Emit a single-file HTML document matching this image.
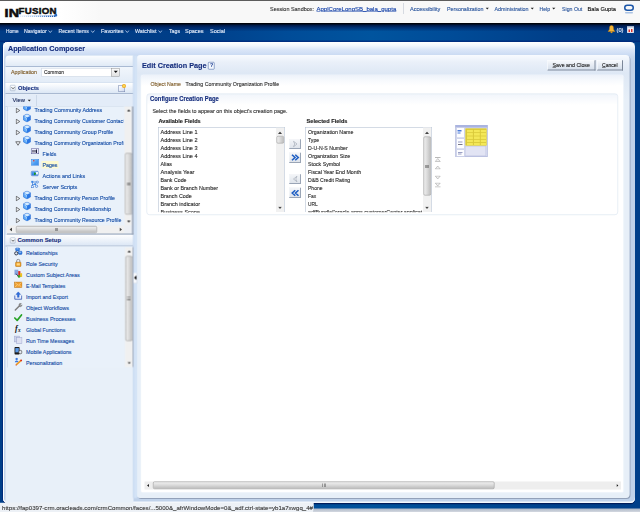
<!DOCTYPE html>
<html><head><meta charset="utf-8"><title>Application Composer</title>
<style>
html,body{margin:0;padding:0;}
body{width:640px;height:512px;overflow:hidden;background:linear-gradient(90deg,#003f8a 0,#00408c 25%,#004c98 45%,#00529c 58%,#004a94 72%,#00408c 90%,#003f8a 100%);font-family:"Liberation Sans",sans-serif;}
#stage{position:absolute;left:0;top:0;width:1280px;height:1024px;transform:scale(.5);transform-origin:0 0;overflow:hidden;}
#stage div, #stage svg, .t{position:absolute;box-sizing:border-box;}
.t{white-space:nowrap;display:block;transform-origin:0 50%;-webkit-text-stroke:0.250px currentColor;}

</style></head>
<body>
<div id="stage">
<!-- top chrome -->
<div style="left:0;top:0;width:1280px;height:2px;background:#5c5c5c"></div>
<div style="left:0;top:2px;width:1280px;height:44px;background:linear-gradient(90deg,#ffffff 0,#ffffff 120px,#f8f8f8 200px,#f8f8f8 100%)"></div>
<div style="left:0;top:53px;width:1280px;height:32px;background:linear-gradient(90deg,#003c86 0,#003e88 30%,#004c98 45%,#00549e 58%,#004c98 70%,#003e88 88%,#003c86 100%)"></div>
<div style="left:0;top:45.500px;width:1280px;height:17px;background:linear-gradient(#000 0,#000a1e 2.500px,rgba(0,22,64,.95) 4px,rgba(0,30,90,.65) 9px,rgba(0,40,110,0) 17px)"></div>
<div style="left:0;top:79px;width:1280px;height:5px;background:linear-gradient(rgba(0,36,120,0),rgba(0,36,120,.9))"></div>
<!-- logo -->
<div style="left:8.500px;top:11.500px;height:28px;font-weight:bold;color:#0d0d0d;white-space:nowrap;font-size:23.500px;line-height:28px;-webkit-text-stroke:1.100px #0d0d0d;transform:scaleX(1.22);transform-origin:0 0;letter-spacing:0.5px">IN</div>
<div style="left:37px;top:11px;height:22px;font-weight:bold;color:#0d0d0d;white-space:nowrap;font-size:17.600px;line-height:22px;-webkit-text-stroke:0.900px #0d0d0d;transform:scaleX(1.10);transform-origin:0 0;letter-spacing:0.5px">FUSION</div>
<div style="left:40px;top:30.500px;width:70px;height:3px;background:repeating-linear-gradient(90deg,rgba(255,255,255,0) 0,rgba(255,255,255,0) 2px,rgba(255,255,255,.75) 2px,rgba(255,255,255,.75) 4px),linear-gradient(90deg,#e4eefa,#9fc0e8 45%,#2d6dc2 85%,#174fa6)"></div>
<div style="left:108px;top:27px;width:7px;height:7px;border-radius:4px;background:radial-gradient(#2a6ac0 40%,rgba(90,150,220,.4) 70%,rgba(255,255,255,0))"></div>
<!-- header separators / arrows -->
<div style="left:806px;top:6px;width:1px;height:22px;background:#b4bccb"></div>
<svg style="left:971px;top:15px" width="8" height="5"><path d="M0 0h7L3.5 4z" fill="#222"/></svg>
<svg style="left:1061px;top:15px" width="8" height="5"><path d="M0 0h7L3.5 4z" fill="#222"/></svg>
<svg style="left:1104px;top:15px" width="8" height="5"><path d="M0 0h7L3.5 4z" fill="#222"/></svg>
<!-- oracle O -->
<div style="left:1248px;top:9px;width:20px;height:13px;border:3px solid #1c56a8;border-radius:7px"></div>
<div style="left:1250px;top:24px;width:16px;height:3px;border-radius:2px;background:#a9c2e4"></div>

<!-- nav arrows -->
<svg style="left:96px;top:60px" width="9" height="7"><path d="M1 1l3.5 4L8 1" fill="none" stroke="#c6d8f2" stroke-width="1.6"/></svg>
<svg style="left:181px;top:60px" width="9" height="7"><path d="M1 1l3.5 4L8 1" fill="none" stroke="#c6d8f2" stroke-width="1.6"/></svg>
<svg style="left:250px;top:60px" width="9" height="7"><path d="M1 1l3.5 4L8 1" fill="none" stroke="#c6d8f2" stroke-width="1.6"/></svg>
<svg style="left:316px;top:60px" width="9" height="7"><path d="M1 1l3.5 4L8 1" fill="none" stroke="#c6d8f2" stroke-width="1.6"/></svg>
<!-- bell -->
<svg style="left:1215px;top:50px" width="16" height="17" viewBox="0 0 16 17"><path d="M8 1c-3 0-4 2.5-4 6 0 3-1.5 4-3 6h14c-1.500-2-3-3-3-6 0-3.500-1-6-4-6z" fill="#f3b63a" stroke="#c47f12" stroke-width="1"/><circle cx="8" cy="14.500" r="2" fill="#e09a1e"/></svg>
<!-- calendar -->
<div style="left:1254px;top:53px;width:14px;height:13px;background:#f4f6fa;border:1px solid #b8c4d6;border-top:3px solid #cfd8e6"></div>
<div style="left:1257px;top:59px;width:3px;height:5px;background:#d8322a"></div>
<div style="left:1262px;top:58px;width:3px;height:6px;background:#d8322a"></div>

<!-- outer panel -->
<div id="outer" style="left:6px;top:84px;width:1264px;height:922px;border-radius:9px;background:linear-gradient(#ffffff 0,#f3f7fd 7px,#dce7f8 15px,#cfdef5 23px,#c6d7ee 30px,#c0d2ea 44px,#c0d2ea 100%);box-shadow:inset 0 -3px 0 #f4f8fd,inset 2px 0 0 #fdfeff,-1.500px 0 0 #002676,0 2.500px 0 #001d5c"></div>

<!-- left panel -->
<div style="left:11.0px;top:111.0px;width:256.0px;height:896.0px;border-radius:8px 0 0 0;background:#e8f0f9;"></div>
<div style="left:11.0px;top:111.0px;width:256.0px;height:23.2px;border-radius:8px 0 0 0;background:linear-gradient(#fbfdff,#e0eaf6);border-bottom:2.500px solid #a9bad3;"></div>
<div style="left:11.0px;top:134.0px;width:256.0px;height:30.0px;background:linear-gradient(#f1f6fc,#e3ecf7);"></div>
<div style="left:83.0px;top:136.0px;width:140.0px;height:17.0px;background:#fff;border:1px solid #c3cfdf;border-right:none;"></div>
<div style="left:222.0px;top:136.0px;width:17.2px;height:17.0px;background:linear-gradient(#fbfbfb,#e2e2e2);border:1.500px solid #8f8f8f;"></div>
<svg style="left:227px;top:141px" width="9" height="6"><path d="M0 0h9L4.500 5z" fill="#111"/></svg>
<div style="left:11.0px;top:164.6px;width:256.0px;height:23.4px;background:linear-gradient(#ffffff,#dce7f5);border-top:1px solid #c9d6e8;border-bottom:2px solid #a9b9d1;"></div>
<div style="left:20.0px;top:170.0px;width:11.0px;height:12.0px;background:linear-gradient(#fff,#dfe6f0);border:1px solid #9aa8be;border-radius:2px;"></div>
<svg style="left:22px;top:173px" width="8" height="7"><path d="M1 1.500l3 3 3-3" fill="none" stroke="#333" stroke-width="1.500"/></svg>
<div style="left:236.6px;top:170.0px;width:13.0px;height:14.4px;background:linear-gradient(135deg,#ffffff,#cfd9ee);border:1.500px solid #6f7fa8;"></div>
<div style="left:244.0px;top:167.6px;width:8.0px;height:8.0px;background:radial-gradient(#fff27a,#f0a818 60%,#d8701a);border-radius:50%;"></div>
<div style="left:11.0px;top:189.0px;width:256.0px;height:24.0px;background:#e3ecf8;border-bottom:1px solid #b5c4d9;"></div>
<div style="left:72.0px;top:190.0px;width:1.0px;height:22.0px;background:#b5c4d9;"></div>
<svg style="left:55px;top:199px" width="8" height="5"><path d="M0 0h7L3.500 4z" fill="#222"/></svg>
<div style="left:14.0px;top:213.0px;width:252.0px;height:238.0px;background:#e9f1fa;border-left:1px solid #c2cfe2;"></div>
<div style="left:14px;top:213px;width:236px;height:238px;overflow:hidden">
<svg style="left:31.0px;top:-8.4px" width="18" height="18" viewBox="0 0 18 18"><path d="M9 1L16 4.500v8.500L9 17 2 13V4.500z" fill="#2b78e4" stroke="#2a6fd4" stroke-width="1"/><path d="M9 1.500L15.500 4.800 9 8.200 2.500 4.800z" fill="#d6ecff"/><path d="M9 8.200v8.300L2.500 12.700V4.800z" fill="#58a6f6"/><path d="M4 7l3.500 2v3.500" stroke="#e4f2ff" stroke-width="1.200" fill="none"/></svg>
<svg style="left:31.0px;top:13.6px" width="18" height="18" viewBox="0 0 18 18"><path d="M9 1L16 4.500v8.500L9 17 2 13V4.500z" fill="#2b78e4" stroke="#2a6fd4" stroke-width="1"/><path d="M9 1.500L15.500 4.800 9 8.200 2.500 4.800z" fill="#d6ecff"/><path d="M9 8.200v8.300L2.500 12.700V4.800z" fill="#58a6f6"/><path d="M4 7l3.500 2v3.500" stroke="#e4f2ff" stroke-width="1.200" fill="none"/></svg>
<svg style="left:31.0px;top:35.6px" width="18" height="18" viewBox="0 0 18 18"><path d="M9 1L16 4.500v8.500L9 17 2 13V4.500z" fill="#2b78e4" stroke="#2a6fd4" stroke-width="1"/><path d="M9 1.500L15.500 4.800 9 8.200 2.500 4.800z" fill="#d6ecff"/><path d="M9 8.200v8.300L2.500 12.700V4.800z" fill="#58a6f6"/><path d="M4 7l3.500 2v3.500" stroke="#e4f2ff" stroke-width="1.200" fill="none"/></svg>
<svg style="left:31.0px;top:57.6px" width="18" height="18" viewBox="0 0 18 18"><path d="M9 1L16 4.500v8.500L9 17 2 13V4.500z" fill="#2b78e4" stroke="#2a6fd4" stroke-width="1"/><path d="M9 1.500L15.500 4.800 9 8.200 2.500 4.800z" fill="#d6ecff"/><path d="M9 8.200v8.300L2.500 12.700V4.800z" fill="#58a6f6"/><path d="M4 7l3.500 2v3.500" stroke="#e4f2ff" stroke-width="1.200" fill="none"/></svg>
<svg style="left:31.0px;top:167.6px" width="18" height="18" viewBox="0 0 18 18"><path d="M9 1L16 4.500v8.500L9 17 2 13V4.500z" fill="#2b78e4" stroke="#2a6fd4" stroke-width="1"/><path d="M9 1.500L15.500 4.800 9 8.200 2.500 4.800z" fill="#d6ecff"/><path d="M9 8.200v8.300L2.500 12.700V4.800z" fill="#58a6f6"/><path d="M4 7l3.500 2v3.500" stroke="#e4f2ff" stroke-width="1.200" fill="none"/></svg>
<svg style="left:31.0px;top:189.6px" width="18" height="18" viewBox="0 0 18 18"><path d="M9 1L16 4.500v8.500L9 17 2 13V4.500z" fill="#2b78e4" stroke="#2a6fd4" stroke-width="1"/><path d="M9 1.500L15.500 4.800 9 8.200 2.500 4.800z" fill="#d6ecff"/><path d="M9 8.200v8.300L2.500 12.700V4.800z" fill="#58a6f6"/><path d="M4 7l3.500 2v3.500" stroke="#e4f2ff" stroke-width="1.200" fill="none"/></svg>
<svg style="left:31.0px;top:211.6px" width="18" height="18" viewBox="0 0 18 18"><path d="M9 1L16 4.500v8.500L9 17 2 13V4.500z" fill="#2b78e4" stroke="#2a6fd4" stroke-width="1"/><path d="M9 1.500L15.500 4.800 9 8.200 2.500 4.800z" fill="#d6ecff"/><path d="M9 8.200v8.300L2.500 12.700V4.800z" fill="#58a6f6"/><path d="M4 7l3.500 2v3.500" stroke="#e4f2ff" stroke-width="1.200" fill="none"/></svg>
</div>
<svg style="left:31.0px;top:215.0px" width="10" height="12"><path d="M1.500 1.500L8.500 6 1.500 10.500z" fill="#f4f7fb" stroke="#333" stroke-width="1.300"/></svg>
<svg style="left:31.0px;top:237.0px" width="10" height="12"><path d="M1.500 1.500L8.500 6 1.500 10.500z" fill="#f4f7fb" stroke="#333" stroke-width="1.300"/></svg>
<svg style="left:31.0px;top:259.0px" width="10" height="12"><path d="M1.500 1.500L8.500 6 1.500 10.500z" fill="#f4f7fb" stroke="#333" stroke-width="1.300"/></svg>
<svg style="left:30.4px;top:281.6px" width="12" height="10"><path d="M1.500 1.500h9L6 8.500z" fill="#f4f7fb" stroke="#333" stroke-width="1.300"/></svg>
<svg style="left:31.0px;top:391.0px" width="10" height="12"><path d="M1.500 1.500L8.500 6 1.500 10.500z" fill="#f4f7fb" stroke="#333" stroke-width="1.300"/></svg>
<svg style="left:31.0px;top:413.0px" width="10" height="12"><path d="M1.500 1.500L8.500 6 1.500 10.500z" fill="#f4f7fb" stroke="#333" stroke-width="1.300"/></svg>
<svg style="left:31.0px;top:435.0px" width="10" height="12"><path d="M1.500 1.500L8.500 6 1.500 10.500z" fill="#f4f7fb" stroke="#333" stroke-width="1.300"/></svg>
<div style="left:62.2px;top:296.8px;width:15.4px;height:11.2px;background:#ececfa;border:1.500px solid #55558f;"></div>
<div style="left:65.2px;top:299.6px;width:2.2px;height:5.6px;background:#1c1c3a;"></div>
<div style="left:68.6px;top:299.6px;width:2.2px;height:5.6px;background:#1c1c3a;"></div>
<div style="left:72.2px;top:298.8px;width:1.6px;height:7.2px;background:#1c1c3a;"></div>
<div style="left:62.2px;top:317.8px;width:15.4px;height:13.6px;background:linear-gradient(135deg,#a8d4ff,#4d9df2 55%,#3b8bea);border:1px solid #2f7fe0;"></div>
<div style="left:66.4px;top:319.8px;width:3.0px;height:3.0px;background:#e0302a;border-radius:50%;"></div>
<div style="left:83.0px;top:322.4px;width:34.0px;height:14.8px;background:#fdf9cf;"></div>
<div style="left:62.2px;top:342.0px;width:15.0px;height:9.8px;background:linear-gradient(#58a8f4,#2a74dc);border:1px solid #1d5fc0;border-radius:2px;"></div>
<svg style="left:67px;top:343.600px" width="8" height="8"><path d="M1 0.500v6L6.500 3.500z" fill="#1f9a1f"/></svg>
<div style="left:72.4px;top:344.4px;width:3.2px;height:5.0px;background:#eaf4ff;"></div>
<svg style="left:62px;top:361px" width="16" height="16" viewBox="0 0 16 16"><path d="M3 3h7M3 3v10M3 8h6M3 13h2" stroke="#2a6fd0" stroke-width="1.300" fill="none"/><rect x="0.500" y="0.500" width="4" height="4" fill="#3b86e6"/><rect x="1" y="10.500" width="4" height="4" fill="#eaf2ff" stroke="#2a6fd0"/><circle cx="11" cy="11.500" r="2.400" fill="#eaf2ff" stroke="#2a6fd0" stroke-width="1.300"/><circle cx="12.500" cy="3" r="2.300" fill="#eaf2ff" stroke="#2a6fd0" stroke-width="1.300"/><rect x="6.500" y="5.500" width="3.500" height="3.500" fill="#3b86e6"/></svg>
<div style="left:246.6px;top:213.0px;width:2.8px;height:238.0px;background:#e9f1fa;z-index:2;"></div>
<div style="left:249.2px;top:213.0px;width:16.0px;height:238.0px;background:#f0f0f0;z-index:2;"></div>
<div style="left:249.7px;top:306.0px;width:15.0px;height:123.2px;background:linear-gradient(90deg,#efefef,#dcdcdc 45%,#bebebe);border:1px solid #8e8e8e;border-radius:3px;z-index:2;"></div>
<svg style="left:254.2px;top:219.4px;z-index:2" width="7" height="4"><path d="M0 4h7L3.500 0z" fill="#222"/></svg>
<svg style="left:254.2px;top:440.6px;z-index:2" width="7" height="4"><path d="M0 0h7L3.500 4z" fill="#222"/></svg>
<div style="left:253.6px;top:365.2px;width:7.2px;height:1.0px;background:#555;z-index:2;"></div>
<div style="left:253.6px;top:367.6px;width:7.2px;height:1.0px;background:#555;z-index:2;"></div>
<div style="left:253.6px;top:370.0px;width:7.2px;height:1.0px;background:#555;z-index:2;"></div>
<div style="left:14.0px;top:451.2px;width:235.2px;height:15.4px;background:#f0f0f0;"></div>
<div style="left:32.0px;top:451.7px;width:161.6px;height:14.4px;background:linear-gradient(#f0f0f0,#dcdcdc 45%,#bcbcbc);border:1px solid #8c8c8c;border-radius:3px;"></div>
<svg style="left:19.0px;top:454.9px" width="5" height="8"><path d="M5 0v8L0 4z" fill="#444"/></svg>
<svg style="left:239.2px;top:454.9px" width="5" height="8"><path d="M0 0v8L5 4z" fill="#444"/></svg>
<div style="left:110.4px;top:455.6px;width:1.0px;height:6.6px;background:#555;"></div>
<div style="left:112.8px;top:455.6px;width:1.0px;height:6.6px;background:#555;"></div>
<div style="left:115.2px;top:455.6px;width:1.0px;height:6.6px;background:#555;"></div>
<div style="left:249.2px;top:451.2px;width:16.0px;height:15.4px;background:#eceff4;"></div>
<div style="left:11.0px;top:468.0px;width:256.0px;height:24.6px;background:linear-gradient(#ffffff,#dce7f5);border-top:1px solid #c9d6e8;border-bottom:2px solid #a9b9d1;"></div>
<div style="left:20.0px;top:475.0px;width:11.0px;height:12.0px;background:linear-gradient(#fff,#dfe6f0);border:1px solid #9aa8be;border-radius:2px;"></div>
<svg style="left:22px;top:478px" width="8" height="7"><path d="M1 1.500l3 3 3-3" fill="none" stroke="#333" stroke-width="1.500"/></svg>
<div style="left:14.0px;top:493.0px;width:252.0px;height:242.0px;background:#e9f1fa;border-left:1px solid #c2cfe2;"></div>
<div style="left:250.0px;top:495.0px;width:15.2px;height:239.0px;background:#f0f0f0;z-index:2;"></div>
<div style="left:250.5px;top:511.6px;width:14.2px;height:170.0px;background:linear-gradient(90deg,#efefef,#dcdcdc 45%,#bebebe);border:1px solid #8e8e8e;border-radius:3px;z-index:2;"></div>
<svg style="left:254.6px;top:501.4px;z-index:2" width="7" height="4"><path d="M0 4h7L3.500 0z" fill="#222"/></svg>
<svg style="left:254.6px;top:723.6px;z-index:2" width="7" height="4"><path d="M0 0h7L3.500 4z" fill="#222"/></svg>
<div style="left:254.4px;top:594.2px;width:6.4px;height:1.0px;background:#555;z-index:2;"></div>
<div style="left:254.4px;top:596.6px;width:6.4px;height:1.0px;background:#555;z-index:2;"></div>
<div style="left:254.4px;top:599.0px;width:6.4px;height:1.0px;background:#555;z-index:2;"></div>
<div style="left:266.4px;top:111.0px;width:7.2px;height:885.0px;background:linear-gradient(90deg,#c9daf0,#d2e2f6 40%,#d6e5f7);z-index:3;"></div>
<div style="left:264.0px;top:213.0px;width:2.6px;height:255.6px;background:#9aa6b8;z-index:5;"></div>
<div style="left:14.0px;top:466.6px;width:252.6px;height:2.2px;background:#9aa6b8;z-index:5;"></div>
<div style="left:265.0px;top:494.0px;width:2.2px;height:240.0px;background:#a3aec0;z-index:5;"></div>
<div style="left:266.8px;top:545.6px;width:7.2px;height:21.2px;background:#f8fafd;border-right:1px solid #c8d2e0;border-bottom:1px solid #c8d2e0;z-index:4;"></div>
<svg style="left:267.500px;top:551px;z-index:5" width="5" height="9"><path d="M5 0v9L0 4.500z" fill="#111"/></svg>
<!-- right panel -->
<div style="left:272.6px;top:110.4px;width:986.4px;height:885.2px;border-radius:8px;background:linear-gradient(#f8fbff 0,#eaf0f9 14px,#dee8f5 36px,#e7eff8 90px,#e7eff8 100%);box-shadow:2px 2px 0 #93a1b9;"></div>
<div style="left:416.4px;top:123.6px;width:13.0px;height:15.2px;background:#f3f7fd;border:1.500px solid #3a5a9a;border-radius:2px;"></div>
<div style="left:1095.0px;top:120.2px;width:96.0px;height:20.6px;background:linear-gradient(#f7f9fc,#d6dfeb);border:1px solid #fff;border-right:2px solid #7c8799;border-bottom:2px solid #7c8799;"></div>
<div style="left:1193.6px;top:120.2px;width:52.0px;height:20.6px;background:linear-gradient(#f7f9fc,#d6dfeb);border:1px solid #fff;border-right:2px solid #7c8799;border-bottom:2px solid #7c8799;"></div>
<div style="left:281.0px;top:149.2px;width:967.0px;height:837.2px;border-radius:6px;background:linear-gradient(#edf2fa 0,#f6f9fd 10px,#ffffff 22px);border:1px solid #f3f7fc;"></div>
<div style="left:292.6px;top:186.8px;width:943.6px;height:243.6px;border-radius:6px;border:1px solid #d3deec;background:linear-gradient(#f1f5fb 0,#fff 22px);"></div>
<div style="left:316.0px;top:254.4px;width:253.0px;height:169.6px;background:#fff;border:1px solid #a9b7cb;border-bottom:none;"></div>
<div style="left:610.0px;top:254.4px;width:253.0px;height:169.6px;background:#fff;border:1px solid #a9b7cb;border-bottom:none;"></div>
<div style="left:552.4px;top:255.4px;width:16.0px;height:168.6px;background:#f1f1f1;z-index:2;"></div>
<div style="left:552.9px;top:272.4px;width:15.0px;height:15.0px;background:linear-gradient(90deg,#efefef,#dcdcdc 45%,#bebebe);border:1px solid #8e8e8e;border-radius:3px;z-index:2;"></div>
<svg style="left:556.4px;top:262.6px;z-index:2" width="8" height="5"><path d="M0 5h8L4 0z" fill="#444"/></svg>
<svg style="left:556.4px;top:412.6px;z-index:2" width="8" height="5"><path d="M0 0h8L4 5z" fill="#444"/></svg>
<div style="left:846.0px;top:255.4px;width:16.0px;height:168.6px;background:#f1f1f1;z-index:2;"></div>
<div style="left:846.5px;top:273.4px;width:15.0px;height:117.4px;background:linear-gradient(90deg,#efefef,#dcdcdc 45%,#bebebe);border:1px solid #8e8e8e;border-radius:3px;z-index:2;"></div>
<svg style="left:850.0px;top:262.6px;z-index:2" width="8" height="5"><path d="M0 5h8L4 0z" fill="#444"/></svg>
<svg style="left:850.0px;top:412.6px;z-index:2" width="8" height="5"><path d="M0 0h8L4 5z" fill="#444"/></svg>
<div style="left:850.4px;top:329.7px;width:7.2px;height:1.0px;background:#555;z-index:2;"></div>
<div style="left:850.4px;top:332.1px;width:7.2px;height:1.0px;background:#555;z-index:2;"></div>
<div style="left:850.4px;top:334.5px;width:7.2px;height:1.0px;background:#555;z-index:2;"></div>
<div style="left:578.0px;top:278.0px;width:23.6px;height:20.0px;background:linear-gradient(#f3f5f8,#dfe4eb);border:1px solid #eef1f5;border-right:2px solid #9aa5b6;border-bottom:2px solid #9aa5b6;"></div>
<div style="left:578.0px;top:305.0px;width:23.6px;height:21.0px;background:linear-gradient(#f3f5f8,#dfe4eb);border:1px solid #eef1f5;border-right:2px solid #9aa5b6;border-bottom:2px solid #9aa5b6;"></div>
<div style="left:578.0px;top:348.0px;width:23.6px;height:20.0px;background:linear-gradient(#f3f5f8,#dfe4eb);border:1px solid #eef1f5;border-right:2px solid #9aa5b6;border-bottom:2px solid #9aa5b6;"></div>
<div style="left:578.0px;top:375.4px;width:23.6px;height:21.0px;background:linear-gradient(#f3f5f8,#dfe4eb);border:1px solid #eef1f5;border-right:2px solid #9aa5b6;border-bottom:2px solid #9aa5b6;"></div>
<svg style="left:584px;top:281px" width="14" height="14"><path d="M3 1.500l7 5.500-7 5.500 2.500-5.500z" fill="#eef0f4" stroke="#9aa2b0" stroke-width="1.200"/></svg>
<svg style="left:582px;top:308px" width="18" height="14"><path d="M2 1.500l6 5.500-6 5.500M8.500 1.500l6 5.500-6 5.500" fill="none" stroke="#1f5fc4" stroke-width="3.200"/></svg>
<svg style="left:583px;top:351px" width="14" height="14"><path d="M11 1.500l-7 5.500 7 5.500-2.500-5.500z" fill="#eef0f4" stroke="#9aa2b0" stroke-width="1.200"/></svg>
<svg style="left:581px;top:379px" width="18" height="14"><path d="M16 1.500l-6 5.500 6 5.500M9.500 1.500l-6 5.500 6 5.500" fill="none" stroke="#1f5fc4" stroke-width="3.200"/></svg>
<svg style="left:869px;top:314px" width="13" height="10"><path d="M1 1h11" stroke="#9a9a9a" stroke-width="1.400"/><path d="M1.500 9h10L6.500 3z" fill="#f2f2f2" stroke="#9a9a9a" stroke-width="1"/></svg>
<svg style="left:869px;top:331px" width="13" height="8"><path d="M1.500 7h10L6.500 1z" fill="#f2f2f2" stroke="#9a9a9a" stroke-width="1"/></svg>
<svg style="left:869px;top:351px" width="13" height="8"><path d="M1.500 1h10L6.500 7z" fill="#f2f2f2" stroke="#9a9a9a" stroke-width="1"/></svg>
<svg style="left:869px;top:365px" width="13" height="10"><path d="M1 9h11" stroke="#9a9a9a" stroke-width="1.400"/><path d="M1.500 1h10L6.500 7z" fill="#f2f2f2" stroke="#9a9a9a" stroke-width="1"/></svg>
<div style="left:911.0px;top:250.4px;width:64.4px;height:64.0px;background:#d3d7ee;border:1px solid #a3abd4;"></div>
<div style="left:911.0px;top:250.4px;width:64.4px;height:4.4px;background:#aab4e0;"></div>
<div style="left:912.6px;top:255.2px;width:16.0px;height:21.2px;background:#fdfdff;border:1px solid #b8c0e0;"></div>
<div style="left:912.6px;top:277.2px;width:16.0px;height:20.8px;background:#fdfdff;border:1px solid #b8c0e0;"></div>
<div style="left:912.6px;top:299.2px;width:16.0px;height:14.0px;background:#fdfdff;border:1px solid #b8c0e0;"></div>
<div style="left:915.0px;top:260.0px;width:8.0px;height:3.0px;background:#4a7ad8;"></div>
<div style="left:915.0px;top:265.0px;width:6.0px;height:2.0px;background:#4a7ad8;"></div>
<div style="left:915.6px;top:283.0px;width:9.0px;height:2.0px;background:#9aa0c4;"></div>
<div style="left:915.6px;top:288.0px;width:9.0px;height:1.6px;background:#778;"></div>
<div style="left:916.4px;top:304.0px;width:9.0px;height:1.6px;background:#9aa0c4;"></div>
<div style="left:916.4px;top:307.2px;width:7.0px;height:1.6px;background:#9aa0c4;"></div>
<div style="left:931.2px;top:257.4px;width:41.4px;height:33.6px;background:#f4e858;border:1px solid #d9c93a;background-image:linear-gradient(#d9c93a 1px,transparent 1px),linear-gradient(90deg,#d9c93a 1px,transparent 1px);background-size:13.8px 6.600px;"></div>
<div style="left:930.4px;top:292.4px;width:42.0px;height:20.0px;background:#e2e4f4;border:1px solid #c4c8e4;"></div>
<div style="left:289.0px;top:962.6px;width:953.0px;height:16.0px;background:#eeeeee;"></div>
<div style="left:306.0px;top:963.1px;width:683.0px;height:15.0px;background:linear-gradient(#f0f0f0,#dcdcdc 45%,#bcbcbc);border:1px solid #8c8c8c;border-radius:3px;"></div>
<svg style="left:294.0px;top:967.6px" width="4" height="6"><path d="M4 0v6L0 3z" fill="#222"/></svg>
<svg style="left:1233.0px;top:967.6px" width="4" height="6"><path d="M0 0v6L4 3z" fill="#222"/></svg>
<div style="left:645.1px;top:967.0px;width:1.0px;height:7.2px;background:#555;"></div>
<div style="left:647.5px;top:967.0px;width:1.0px;height:7.2px;background:#555;"></div>
<div style="left:649.9px;top:967.0px;width:1.0px;height:7.2px;background:#555;"></div>
<div style="left:0.0px;top:1017.2px;width:1280.0px;height:6.8px;background:linear-gradient(#aeb8c8,#d3d8e0);"></div>
<div style="left:0.0px;top:1005.2px;width:628.0px;height:18.8px;background:#edf1f6;border-top:1px solid #b9c0cc;border-right:1px solid #b9c0cc;border-radius:0 3px 0 0;"></div>
<svg style="left:27.500px;top:494.6px" width="17" height="17" viewBox="0 0 16 16"><rect x="3" y="0.500" width="7.500" height="6" rx="2" fill="#2f7be0" stroke="#1b57b8" stroke-width=".8"/><rect x="8" y="7" width="7.500" height="6" rx="2" fill="#2f7be0" stroke="#1b57b8" stroke-width=".8"/><circle cx="4.200" cy="11" r="3" fill="#dfe8f6" stroke="#1d2538" stroke-width="1.600"/><path d="M4.500 2.500h4M9.500 9h4" stroke="#cfe4ff" stroke-width="1.200"/></svg>
<svg style="left:27.500px;top:516.6px" width="17" height="17" viewBox="0 0 16 16"><path d="M5 8V4.500a3 3 0 0 1 6 0V8" fill="none" stroke="#8a8f99" stroke-width="1.800"/><rect x="3" y="7" width="10" height="8" rx="1" fill="#f2a21e" stroke="#b46c10" stroke-width="1"/><rect x="5" y="9" width="6" height="4" fill="#ffd98a"/></svg>
<svg style="left:27.500px;top:538.6px" width="17" height="17" viewBox="0 0 16 16"><path d="M1 1h7M1 3h7M1 5h7M1 7h7M1 9h7" stroke="#2a5fc8" stroke-width="1.200"/><rect x="8" y="3" width="4" height="9" fill="#d8281e"/><rect x="11.500" y="7" width="4" height="7" fill="#f0c020"/><circle cx="9.500" cy="13" r="2.500" fill="#3aaa2a"/><path d="M4 8l4 5" stroke="#223" stroke-width="1.500"/></svg>
<svg style="left:27.500px;top:560.6px" width="17" height="17" viewBox="0 0 16 16"><rect x="1" y="3" width="14" height="10" fill="#f0a030" stroke="#b87010" stroke-width="1"/><path d="M1.500 3.500l6.500 5.500 6.500-5.500M1.500 12.500l5-4.500M14.500 12.500l-5-4.500" fill="none" stroke="#ffe2a8" stroke-width="1"/></svg>
<svg style="left:27.500px;top:582.6px" width="17" height="17" viewBox="0 0 16 16"><path d="M1.500 7.500v7h13v-7" fill="#eef2fd" stroke="#2a4fb0" stroke-width="1.500"/><path d="M8 0.500l4.500 5h-2.800v5.500h-3.400V5.500H3.500z" fill="#2f6fe0" stroke="#1d4fb0" stroke-width=".6"/></svg>
<svg style="left:27.500px;top:604.6px" width="17" height="17" viewBox="0 0 16 16"><path d="M2.500 14L10 6.500" stroke="#7d7d7d" stroke-width="2.600" stroke-linecap="round"/><path d="M9 4.500a3.500 3.500 0 0 1 5-2.500l-2.500 2.500 1 1.500 3-2a3.500 3.500 0 0 1-5 3.500z" fill="#8a8a8a" stroke="#666" stroke-width=".6"/></svg>
<svg style="left:27.500px;top:626.6px" width="17" height="17" viewBox="0 0 16 16"><path d="M1.500 8.500l4.500 4.500L14.500 2.500" fill="none" stroke="#27a327" stroke-width="3.200" stroke-linecap="round" stroke-linejoin="round"/></svg>
<svg style="left:27.500px;top:648.6px" width="17" height="17" viewBox="0 0 16 16"><text x="2" y="13" font-family="Liberation Serif, serif" font-style="italic" font-weight="bold" font-size="15" fill="#111">f</text><text x="7.500" y="15" font-family="Liberation Serif, serif" font-style="italic" font-weight="bold" font-size="10" fill="#111">x</text></svg>
<svg style="left:27.500px;top:670.6px" width="17" height="17" viewBox="0 0 16 16"><rect x="1" y="1" width="9" height="11" fill="#cdd3ea" stroke="#9ca5cc" stroke-width="1"/><rect x="5" y="4" width="10" height="11" fill="#dde1f2" stroke="#9ca5cc" stroke-width="1"/></svg>
<svg style="left:27.500px;top:692.6px" width="17" height="17" viewBox="0 0 16 16"><rect x="1" y="1" width="9.500" height="14" rx="1.500" fill="#1c1c1c"/><rect x="2.500" y="3" width="6.500" height="8" fill="#5a9ae8"/><circle cx="12" cy="10.500" r="3.200" fill="#e6e9f0" stroke="#444" stroke-width="1.300"/></svg>
<svg style="left:27.500px;top:714.6px" width="17" height="17" viewBox="0 0 16 16"><circle cx="5" cy="2.800" r="2.200" fill="#3a7ae0"/><path d="M1.500 9a3.500 3.500 0 0 1 7 0" fill="#3a7ae0"/><path d="M4 14L14 5" stroke="#f09a20" stroke-width="3"/><path d="M3 15l2.500-.5-2-2z" fill="#c8281e"/><path d="M12.500 6.500L14.500 4.500" stroke="#d8281e" stroke-width="3"/></svg>
<span class="t" style="left:540.0px;top:9.9px;font-size:11.4px;line-height:15px;color:#333;transform:scaleX(0.958);">Session Sandbox:</span>
<span class="t" style="left:633.0px;top:9.9px;font-size:11.4px;line-height:15px;color:#1440a8;transform:scaleX(1.058);text-decoration:underline;">ApplCoreLongSB_bala_gupta</span>
<span class="t" style="left:820.0px;top:9.9px;font-size:11.4px;line-height:15px;color:#2a559c;transform:scaleX(0.977);">Accessibility</span>
<span class="t" style="left:893.8px;top:9.9px;font-size:11.4px;line-height:15px;color:#2a559c;transform:scaleX(0.935);">Personalization</span>
<span class="t" style="left:989.0px;top:9.9px;font-size:11.4px;line-height:15px;color:#2a559c;transform:scaleX(0.945);">Administration</span>
<span class="t" style="left:1079.0px;top:9.9px;font-size:11.4px;line-height:15px;color:#2a559c;transform:scaleX(0.896);">Help</span>
<span class="t" style="left:1124.0px;top:9.9px;font-size:11.4px;line-height:15px;color:#2a559c;transform:scaleX(0.916);">Sign Out</span>
<span class="t" style="left:1175.0px;top:9.9px;font-size:11.4px;line-height:15px;color:#111;transform:scaleX(1.000);">Bala Gupta</span>
<span class="t" style="left:12.0px;top:54.5px;font-size:11.4px;line-height:15px;color:#e2ecfa;transform:scaleX(0.839);">Home</span>
<span class="t" style="left:47.6px;top:54.5px;font-size:11.4px;line-height:15px;color:#e2ecfa;transform:scaleX(0.931);">Navigator</span>
<span class="t" style="left:117.4px;top:54.5px;font-size:11.4px;line-height:15px;color:#e2ecfa;transform:scaleX(0.903);">Recent Items</span>
<span class="t" style="left:202.0px;top:54.5px;font-size:11.4px;line-height:15px;color:#e2ecfa;transform:scaleX(0.961);">Favorites</span>
<span class="t" style="left:270.0px;top:54.5px;font-size:11.4px;line-height:15px;color:#e2ecfa;transform:scaleX(0.939);">Watchlist</span>
<span class="t" style="left:338.0px;top:54.5px;font-size:11.4px;line-height:15px;color:#e2ecfa;transform:scaleX(0.914);">Tags</span>
<span class="t" style="left:370.0px;top:54.5px;font-size:11.4px;line-height:15px;color:#e2ecfa;transform:scaleX(0.974);">Spaces</span>
<span class="t" style="left:420.0px;top:54.5px;font-size:11.4px;line-height:15px;color:#e2ecfa;transform:scaleX(0.967);">Social</span>
<span class="t" style="left:1233.4px;top:51.5px;font-size:11.4px;line-height:15px;color:#e2ecfa;transform:scaleX(1.006);">(0)</span>
<span class="t" style="left:16.0px;top:87.0px;font-size:15px;line-height:19px;color:#142c7c;font-weight:bold;transform:scaleX(0.962);">Application Composer</span>
<span class="t" style="left:22.0px;top:136.0px;font-size:11.4px;line-height:15px;color:#7d5a25;transform:scaleX(0.933);">Application</span>
<span class="t" style="left:87.5px;top:136.0px;font-size:11.4px;line-height:15px;color:#2a2a2a;transform:scaleX(0.865);">Common</span>
<span class="t" style="left:35.8px;top:166.5px;font-size:12px;line-height:16px;color:#142c7c;font-weight:bold;transform:scaleX(0.954);">Objects</span>
<span class="t" style="left:25.0px;top:192.0px;font-size:11.4px;line-height:15px;color:#1a2a5c;transform:scaleX(1.021);">View</span>
<span class="t" style="left:35.0px;top:472.0px;font-size:12px;line-height:16px;color:#142c7c;font-weight:bold;transform:scaleX(0.981);">Common Setup</span>
<span class="t" style="left:283.5px;top:119.8px;font-size:16px;line-height:20px;color:#142c7c;font-weight:bold;transform:scaleX(0.907);">Edit Creation Page</span>
<span class="t" style="left:301.0px;top:160.1px;font-size:11.4px;line-height:15px;color:#7d5a25;transform:scaleX(0.918);">Object Name</span>
<span class="t" style="left:371.0px;top:160.1px;font-size:11.4px;line-height:15px;color:#333;transform:scaleX(0.927);">Trading Community Organization Profile</span>
<span class="t" style="left:299.5px;top:188.1px;font-size:13px;line-height:17px;color:#142c7c;font-weight:bold;transform:scaleX(0.902);">Configure Creation Page</span>
<span class="t" style="left:304.5px;top:214.0px;font-size:11.4px;line-height:15px;color:#333;transform:scaleX(0.947);">Select the fields to appear on this object's creation page.</span>
<span class="t" style="left:317.0px;top:234.9px;font-size:11px;line-height:15px;color:#222;font-weight:bold;transform:scaleX(1.021);">Available Fields</span>
<span class="t" style="left:613.0px;top:234.9px;font-size:11px;line-height:15px;color:#222;font-weight:bold;transform:scaleX(1.024);">Selected Fields</span>
<span class="t" style="left:1105.0px;top:121.7px;font-size:11.4px;line-height:15px;color:#222;transform:scaleX(0.932);"><u>S</u>ave and Close</span>
<span class="t" style="left:1203.5px;top:121.7px;font-size:11.4px;line-height:15px;color:#222;transform:scaleX(0.888);"><u>C</u>ancel</span>
<span class="t" style="left:4.0px;top:1007.2px;font-size:12.5px;line-height:16px;color:#3a3a3a;transform:scaleX(0.975);">https://fap0397-crm.oracleads.com/crmCommon/faces/...5000&amp;_afrWindowMode=0&amp;_adf.ctrl-state=yb1a7xwgq_4#</span>
<span class="t" style="left:69.2px;top:212.1px;font-size:11.4px;line-height:15px;color:#154da6;transform:scaleX(0.945);">Trading Community Address</span>
<span class="t" style="left:69.2px;top:234.1px;font-size:11.4px;line-height:15px;color:#154da6;transform:scaleX(0.930);">Trading Community Customer Contact</span>
<span class="t" style="left:69.2px;top:256.1px;font-size:11.4px;line-height:15px;color:#154da6;transform:scaleX(0.929);">Trading Community Group Profile</span>
<span class="t" style="left:69.2px;top:278.1px;font-size:11.4px;line-height:15px;color:#154da6;transform:scaleX(0.927);">Trading Community Organization Profile</span>
<span class="t" style="left:85.0px;top:300.1px;font-size:11.4px;line-height:15px;color:#154da6;transform:scaleX(0.908);">Fields</span>
<span class="t" style="left:85.0px;top:322.1px;font-size:11.4px;line-height:15px;color:#154da6;transform:scaleX(0.928);">Pages</span>
<span class="t" style="left:85.0px;top:344.1px;font-size:11.4px;line-height:15px;color:#154da6;transform:scaleX(0.959);">Actions and Links</span>
<span class="t" style="left:85.0px;top:366.1px;font-size:11.4px;line-height:15px;color:#154da6;transform:scaleX(0.976);">Server Scripts</span>
<span class="t" style="left:69.2px;top:388.1px;font-size:11.4px;line-height:15px;color:#154da6;transform:scaleX(0.926);">Trading Community Person Profile</span>
<span class="t" style="left:69.2px;top:410.1px;font-size:11.4px;line-height:15px;color:#154da6;transform:scaleX(0.926);">Trading Community Relationship</span>
<span class="t" style="left:69.2px;top:432.1px;font-size:11.4px;line-height:15px;color:#154da6;transform:scaleX(0.932);">Trading Community Resource Profile</span>
<span class="t" style="left:51.6px;top:499.4px;font-size:11.4px;line-height:15px;color:#154da6;transform:scaleX(0.927);">Relationships</span>
<span class="t" style="left:51.6px;top:521.4px;font-size:11.4px;line-height:15px;color:#154da6;transform:scaleX(0.936);">Role Security</span>
<span class="t" style="left:51.6px;top:543.4px;font-size:11.4px;line-height:15px;color:#154da6;transform:scaleX(0.953);">Custom Subject Areas</span>
<span class="t" style="left:51.6px;top:565.4px;font-size:11.4px;line-height:15px;color:#154da6;transform:scaleX(0.902);">E-Mail Templates</span>
<span class="t" style="left:51.6px;top:587.4px;font-size:11.4px;line-height:15px;color:#154da6;transform:scaleX(0.925);">Import and Export</span>
<span class="t" style="left:51.6px;top:609.4px;font-size:11.4px;line-height:15px;color:#154da6;transform:scaleX(0.975);">Object Workflows</span>
<span class="t" style="left:51.6px;top:631.4px;font-size:11.4px;line-height:15px;color:#154da6;transform:scaleX(0.967);">Business Processes</span>
<span class="t" style="left:51.6px;top:653.4px;font-size:11.4px;line-height:15px;color:#154da6;transform:scaleX(0.919);">Global Functions</span>
<span class="t" style="left:51.6px;top:675.4px;font-size:11.4px;line-height:15px;color:#154da6;transform:scaleX(0.927);">Run Time Messages</span>
<span class="t" style="left:51.6px;top:697.4px;font-size:11.4px;line-height:15px;color:#154da6;transform:scaleX(0.933);">Mobile Applications</span>
<span class="t" style="left:51.6px;top:719.4px;font-size:11.4px;line-height:15px;color:#154da6;transform:scaleX(0.927);">Personalization</span>
<span class="t" style="left:321.0px;top:255.0px;font-size:12px;line-height:16px;color:#2a2a2a;transform:scaleX(0.924);z-index:1;">Address Line 1</span>
<span class="t" style="left:321.0px;top:271.0px;font-size:12px;line-height:16px;color:#2a2a2a;transform:scaleX(0.924);z-index:1;">Address Line 2</span>
<span class="t" style="left:321.0px;top:287.0px;font-size:12px;line-height:16px;color:#2a2a2a;transform:scaleX(0.924);z-index:1;">Address Line 3</span>
<span class="t" style="left:321.0px;top:303.0px;font-size:12px;line-height:16px;color:#2a2a2a;transform:scaleX(0.924);z-index:1;">Address Line 4</span>
<span class="t" style="left:321.0px;top:319.0px;font-size:12px;line-height:16px;color:#2a2a2a;transform:scaleX(0.884);z-index:1;">Alias</span>
<span class="t" style="left:321.0px;top:335.0px;font-size:12px;line-height:16px;color:#2a2a2a;transform:scaleX(0.944);z-index:1;">Analysis Year</span>
<span class="t" style="left:321.0px;top:351.0px;font-size:12px;line-height:16px;color:#2a2a2a;transform:scaleX(0.876);z-index:1;">Bank Code</span>
<span class="t" style="left:321.0px;top:367.0px;font-size:12px;line-height:16px;color:#2a2a2a;transform:scaleX(0.893);z-index:1;">Bank or Branch Number</span>
<span class="t" style="left:321.0px;top:383.0px;font-size:12px;line-height:16px;color:#2a2a2a;transform:scaleX(0.892);z-index:1;">Branch Code</span>
<span class="t" style="left:321.0px;top:399.0px;font-size:12px;line-height:16px;color:#2a2a2a;transform:scaleX(0.911);z-index:1;">Branch indicator</span>
<span class="t" style="left:321.0px;top:415.0px;font-size:12px;line-height:16px;color:#2a2a2a;transform:scaleX(0.918);z-index:1;clip-path:inset(0 0 6px 0);">Business Scope</span>
<span class="t" style="left:615.6px;top:255.0px;font-size:12px;line-height:16px;color:#2a2a2a;transform:scaleX(0.878);z-index:1;">Organization Name</span>
<span class="t" style="left:615.6px;top:271.0px;font-size:12px;line-height:16px;color:#2a2a2a;transform:scaleX(0.853);z-index:1;">Type</span>
<span class="t" style="left:615.6px;top:287.0px;font-size:12px;line-height:16px;color:#2a2a2a;transform:scaleX(0.861);z-index:1;">D-U-N-S Number</span>
<span class="t" style="left:615.6px;top:303.0px;font-size:12px;line-height:16px;color:#2a2a2a;transform:scaleX(0.891);z-index:1;">Organization Size</span>
<span class="t" style="left:615.6px;top:319.0px;font-size:12px;line-height:16px;color:#2a2a2a;transform:scaleX(0.878);z-index:1;">Stock Symbol</span>
<span class="t" style="left:615.6px;top:335.0px;font-size:12px;line-height:16px;color:#2a2a2a;transform:scaleX(0.886);z-index:1;">Fiscal Year End Month</span>
<span class="t" style="left:615.6px;top:351.0px;font-size:12px;line-height:16px;color:#2a2a2a;transform:scaleX(0.861);z-index:1;">D&amp;B Credit Rating</span>
<span class="t" style="left:615.6px;top:367.0px;font-size:12px;line-height:16px;color:#2a2a2a;transform:scaleX(0.836);z-index:1;">Phone</span>
<span class="t" style="left:615.6px;top:383.0px;font-size:12px;line-height:16px;color:#2a2a2a;transform:scaleX(0.819);z-index:1;">Fax</span>
<span class="t" style="left:615.6px;top:399.0px;font-size:12px;line-height:16px;color:#2a2a2a;transform:scaleX(0.808);z-index:1;">URL</span>
<span class="t" style="left:615.6px;top:415.0px;font-size:12px;line-height:16px;color:#2a2a2a;transform:scaleX(0.898);z-index:1;clip-path:inset(0 0 6px 0);">adfBundle['oracle.apps.customerCenter.applicat</span>
<span class="t" style="left:419.8px;top:123.2px;font-size:10px;line-height:14px;color:#2a4a9a;font-weight:bold;transform:scaleX(1.048);">?</span>
</div>
</body></html>
